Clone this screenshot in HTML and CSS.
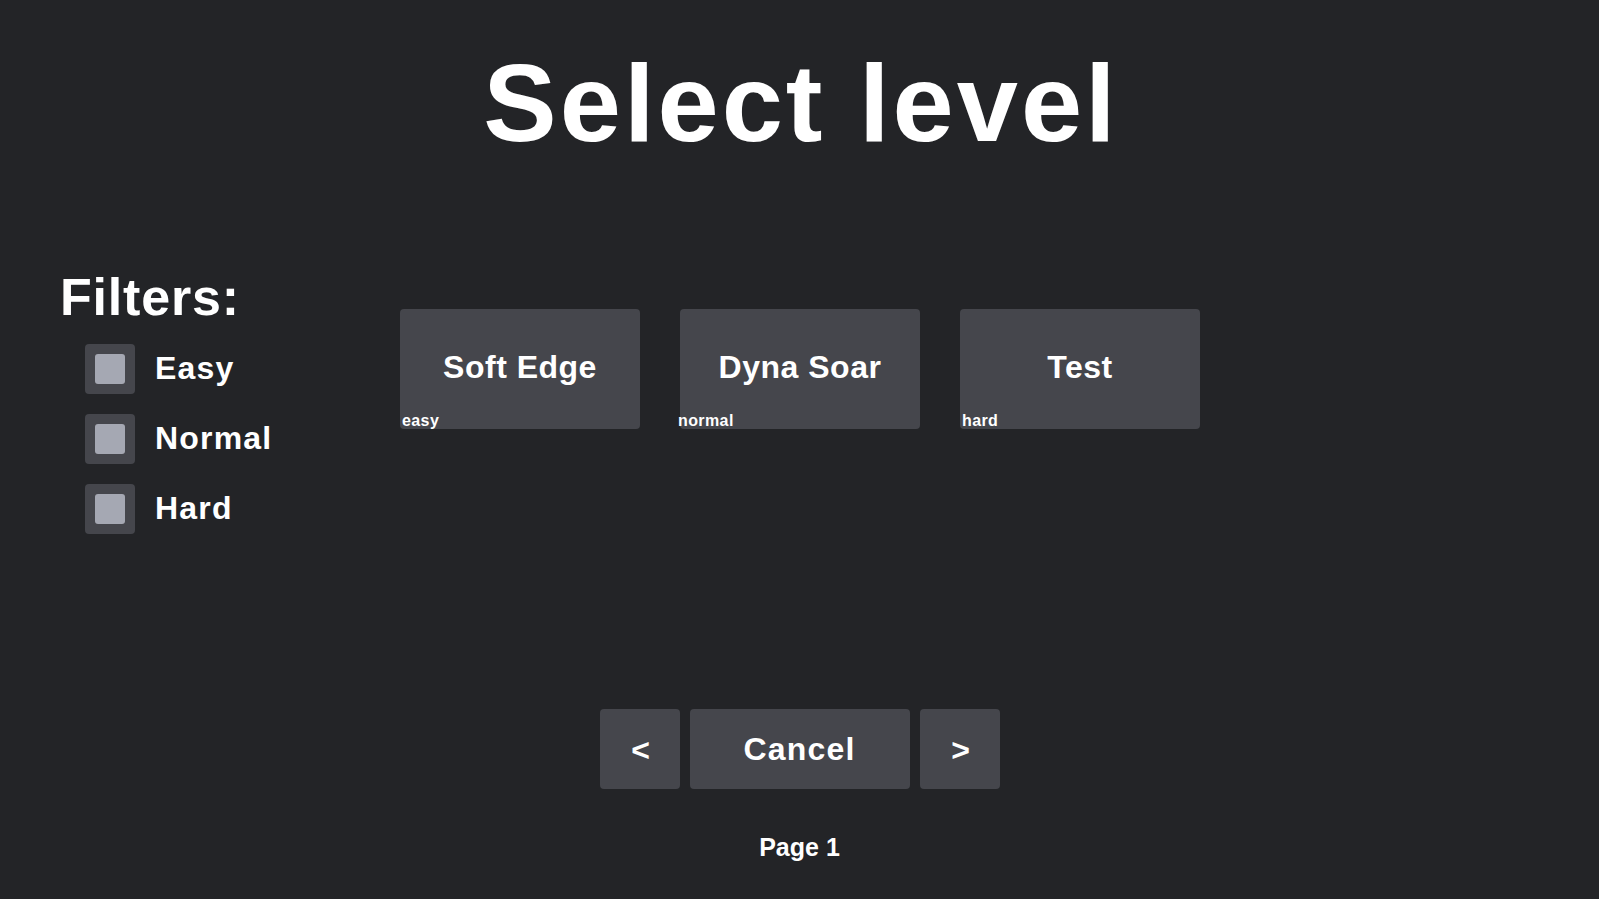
FILE: index.html
```html
<!DOCTYPE html>
<html lang="en">
<head>
<meta charset="utf-8">
<title>Select level</title>
<link rel="stylesheet" href="styles.css">
</head>
<body>
<div class="screen">
  <h1 class="title">Select level</h1>
  <main class="content">
    <aside class="filters">
      <h2 class="filters-title">Filters:</h2>
      <ul class="filter-list">
        <li class="filter"><span class="check"><span class="check-inner"></span></span><span class="filter-label">Easy</span></li>
        <li class="filter"><span class="check"><span class="check-inner"></span></span><span class="filter-label">Normal</span></li>
        <li class="filter"><span class="check"><span class="check-inner"></span></span><span class="filter-label">Hard</span></li>
      </ul>
    </aside>
    <section class="levels">
      <div class="level"><span class="level-name">Soft Edge</span><span class="tag">easy</span></div>
      <div class="level"><span class="level-name">Dyna Soar</span><span class="tag tag-out">normal</span></div>
      <div class="level"><span class="level-name">Test</span><span class="tag">hard</span></div>
    </section>
  </main>
  <footer class="footer">
    <div class="nav">
      <button class="btn btn-small btn-arrow">&lt;</button>
      <button class="btn btn-wide">Cancel</button>
      <button class="btn btn-small btn-arrow">&gt;</button>
    </div>
    <div class="page">Page 1</div>
  </footer>
</div>
</body>
</html>
```
FILE: styles.css
```css
* { box-sizing: border-box; }
html, body {
  margin: 0;
  padding: 0;
  background: #232427;
}
body {
  font-family: "Liberation Sans", Arial, sans-serif;
  font-weight: bold;
  color: #ffffff;
}
.screen {
  width: 1599px;
  height: 899px;
  display: flex;
  flex-direction: column;
  overflow: hidden;
}
.title {
  margin: 0;
  padding-top: 48px;
  font-size: 110px;
  line-height: 110px;
  letter-spacing: 3px;
  text-align: center;
  padding-left: 3px;
}
.content {
  display: flex;
  align-items: flex-start;
  margin-top: 109px;
}
.filters {
  width: 400px;
  padding-left: 60px;
}
.filters-title {
  margin: 0;
  font-size: 52px;
  line-height: 60px;
  letter-spacing: 0.8px;
}
.filter-list {
  list-style: none;
  margin: 17px 0 0 25px;
  padding: 0;
  display: flex;
  flex-direction: column;
  gap: 20px;
}
.filter {
  display: flex;
  align-items: center;
  gap: 20px;
  height: 50px;
}
.check {
  width: 50px;
  height: 50px;
  padding: 10px;
  background: #45464c;
  border-radius: 4px;
}
.check-inner {
  display: block;
  width: 30px;
  height: 30px;
  background: #a5a8b3;
  border-radius: 3px;
}
.filter-label {
  font-size: 32px;
  line-height: 50px;
  letter-spacing: 1.2px;
  padding-bottom: 3px;
}
.levels {
  display: flex;
  gap: 40px;
  margin-top: 42px;
}
.level {
  position: relative;
  width: 240px;
  height: 120px;
  background: #45464c;
  border-radius: 4px;
  display: flex;
  align-items: center;
  justify-content: center;
  padding-bottom: 4px;
}
.level-name {
  font-size: 32px;
  letter-spacing: 0.5px;
}
.tag {
  position: absolute;
  left: 2px;
  bottom: 0;
  font-size: 16px;
  line-height: 16px;
  letter-spacing: 0.4px;
}
.tag-out {
  left: -2px;
}
.footer {
  margin-top: 175px;
  display: flex;
  flex-direction: column;
  align-items: center;
}
.nav {
  display: flex;
  gap: 10px;
}
.btn {
  height: 80px;
  border: none;
  border-radius: 4px;
  background: #45464c;
  color: #ffffff;
  font-family: "Liberation Sans", Arial, sans-serif;
  font-weight: bold;
  font-size: 32px;
  letter-spacing: 1.2px;
  padding: 0;
  display: flex;
  align-items: center;
  justify-content: center;
}
.btn-arrow {
  padding-top: 3px;
  padding-left: 2px;
  letter-spacing: 0;
}
.btn-small { width: 80px; }
.btn-wide { width: 220px; }
.page {
  margin-top: 43px;
  font-size: 25px;
  line-height: 30px;
}
```
